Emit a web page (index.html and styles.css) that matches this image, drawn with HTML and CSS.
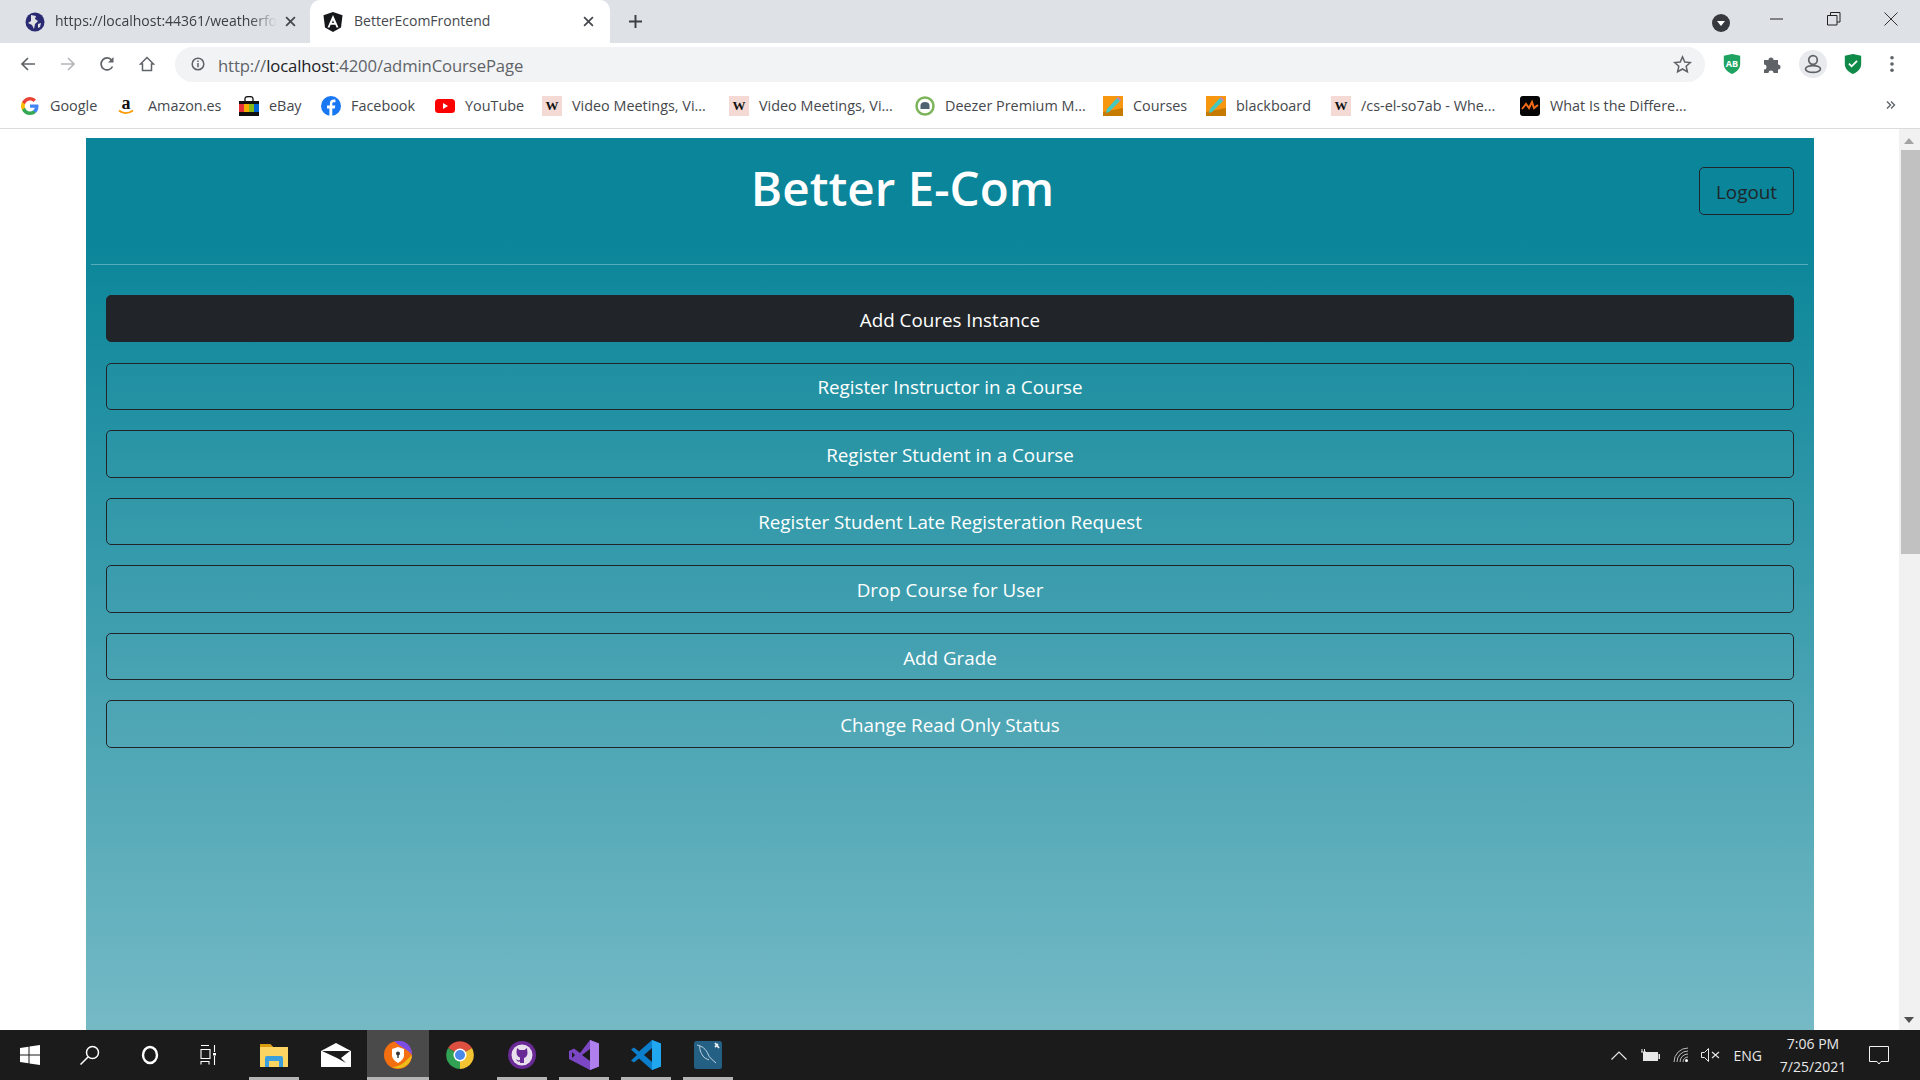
FILE: index.html
```html
<!DOCTYPE html>
<html lang="en">
<head>
<meta charset="utf-8">
<title>BetterEcomFrontend</title>
<link rel="stylesheet" href="styles.css">
</head>
<body>
<div class="tabstrip">
  <div class="tab tab-inactive">
    <svg class="fav" viewBox="0 0 20 20"><circle cx="10" cy="10" r="9.500" fill="#2a2a72"/><path d="M6 3l5 1-1 3 3 2-3 3-1 5-2-4-4-2 3-2zM13 12l3-1-1 4-2 1z" fill="#dfe1e5"/></svg>
    <span class="tab-title tab-fade">https://localhost:44361/weatherfo</span>
    <svg class="tab-x" viewBox="0 0 10 10"><path d="M1 1l8 8M9 1l-8 8" stroke="#45484d" stroke-width="1.600"/></svg>
  </div>
  <div class="tab tab-active">
    <svg class="fav" viewBox="0 0 20 20"><path d="M10 0l9.500 3.300-1.500 12.300L10 20l-8-4.400L.5 3.300z" fill="#15171a"/><path d="M10 3L4.500 15.500h2l1.100-2.800h4.800l1.100 2.800h2zM9 10.900l1-2.700 1 2.700z" fill="#fff"/></svg>
    <span class="tab-title">BetterEcomFrontend</span>
    <svg class="tab-x" viewBox="0 0 10 10"><path d="M1 1l8 8M9 1l-8 8" stroke="#45484d" stroke-width="1.600"/></svg>
  </div>
  <svg class="newtab" viewBox="0 0 12 12"><path d="M6 0v12M0 6h12" stroke="#3c4043" stroke-width="1.800"/></svg>
  <div class="strip-end">
    <svg class="tabsearch" viewBox="0 0 18 18"><circle cx="9" cy="9" r="9" fill="#36393d"/><path d="M5 7h8l-4 5z" fill="#fff"/></svg>
    <svg class="win-btn" viewBox="0 0 14 14"><path d="M0 7h13" stroke="#222" stroke-width="1"/></svg>
    <svg class="win-btn" viewBox="0 0 14 14"><path d="M.5 3.500h9.500v9.500H.5zM3.500 3.500V.5H13v9.500h-3" fill="none" stroke="#222" stroke-width="1"/></svg>
    <svg class="win-btn" viewBox="0 0 14 14"><path d="M.5.5l13 13M13.500.5l-13 13" stroke="#333" stroke-width="1"/></svg>
  </div>
</div>

<div class="toolbar">
  <svg class="nav-ic" viewBox="0 0 16 16"><path d="M15 8H2M8 2L2 8l6 6" fill="none" stroke="#5f6368" stroke-width="1.700"/></svg>
  <svg class="nav-ic" viewBox="0 0 16 16"><path d="M1 8h13M8 2l6 6-6 6" fill="none" stroke="#b4b6b9" stroke-width="1.700"/></svg>
  <svg class="nav-ic" viewBox="0 0 16 16"><path d="M13.500 10.500A6 6 0 1 1 12.800 4.200" fill="none" stroke="#5f6368" stroke-width="1.700"/><path d="M14.500 1v5.500H9z" fill="#5f6368"/></svg>
  <svg class="nav-ic" viewBox="0 0 16 16"><path d="M8 1.500L1.500 8H3.500v6.500h9V8h2z" fill="none" stroke="#5f6368" stroke-width="1.500"/></svg>
  <div class="omnibox">
    <svg class="info" viewBox="0 0 14 14"><circle cx="7" cy="7" r="5.800" fill="none" stroke="#5f6368" stroke-width="1.500"/><path d="M7 6v4.200M7 3.600v1.400" stroke="#5f6368" stroke-width="1.500"/></svg>
    <span class="url"><span class="url-dim">http://</span><span class="url-host">localhost</span><span class="url-dim">:4200/adminCoursePage</span></span>
    <svg class="star" viewBox="0 0 20 20"><path d="M10 2l2.400 5.400 5.800.6-4.300 3.900 1.200 5.700L10 14.700l-5.100 2.900 1.200-5.700L1.800 8l5.800-.6z" fill="none" stroke="#5f6368" stroke-width="1.600"/></svg>
  </div>
  <div class="ext-group">
    <svg class="ext ext-ab" viewBox="0 0 20 22"><path d="M10 0l9 2v9c0 5-4 9-9 11C5 20 1 16 1 11V2z" fill="#1ea362"/><text x="10" y="14" class="ab-text">AB</text></svg>
    <svg class="ext ext-puzzle" viewBox="0 0 20 20"><path d="M1 6h4.500a2.500 2.500 0 1 1 5 0H15v4.400a2.500 2.500 0 1 1 0 5V19h-4.500a2.500 2.500 0 1 0-5 0H1v-3.600a2.500 2.500 0 1 0 0-5z" fill="#5f6368"/></svg>
    <div class="avatar"><svg viewBox="0 0 20 20"><circle cx="10" cy="6" r="4.300" fill="none" stroke="#5f6368" stroke-width="1.700"/><ellipse cx="10" cy="15" rx="7.500" ry="3.400" fill="none" stroke="#5f6368" stroke-width="1.700"/></svg></div>
    <svg class="ext" viewBox="0 0 20 22"><path d="M10 0l9 2v9c0 5-4 9-9 11C5 20 1 16 1 11V2z" fill="#0f8a48"/><path d="M5.500 10.500l3 3 6-6" fill="none" stroke="#fff" stroke-width="2"/></svg>
    <svg class="ext dots" viewBox="0 0 6 20"><circle cx="3" cy="3" r="2" fill="#5f6368"/><circle cx="3" cy="10" r="2" fill="#5f6368"/><circle cx="3" cy="17" r="2" fill="#5f6368"/></svg>
  </div>
</div>

<div class="bookmarks">
  <div class="bm bm-google"><svg class="bm-ic" viewBox="0 0 20 20"><path d="M18.500 10.200c0-.6-.1-1.200-.2-1.700H10v3.300h4.800a4 4 0 0 1-1.800 2.700v2.200h2.900c1.700-1.600 2.600-3.800 2.600-6.500z" fill="#4285f4"/><path d="M10 19c2.400 0 4.400-.8 5.900-2.200L13 14.500c-.8.500-1.800.9-3 .9-2.300 0-4.300-1.600-5-3.700H2v2.300A9 9 0 0 0 10 19z" fill="#34a853"/><path d="M5 11.700a5.400 5.400 0 0 1 0-3.400V6H2a9 9 0 0 0 0 8z" fill="#fbbc05"/><path d="M10 4.600c1.300 0 2.500.5 3.400 1.300L16 3.400A9 9 0 0 0 2 6l3 2.300c.7-2.100 2.700-3.700 5-3.700z" fill="#ea4335"/></svg><span>Google</span></div>
  <div class="bm bm-amazon"><svg class="bm-ic" viewBox="0 0 20 20"><text x="8" y="13" class="amz-text">a</text><path d="M1 14.500c4 3.500 9 3.500 14 0" fill="none" stroke="#f90" stroke-width="1.700"/></svg><span>Amazon.es</span></div>
  <div class="bm bm-ebay"><svg class="bm-ic" viewBox="0 0 20 20"><path d="M6 5V2.500a4 2 0 0 1 8 0V5" fill="none" stroke="#111" stroke-width="1.300"/><rect y="5" width="20" height="15" fill="#111"/><rect y="8" width="5" height="8" fill="#e53238"/><rect x="5" y="8" width="5" height="8" fill="#f5af02"/><rect x="10" y="8" width="5" height="8" fill="#86b817"/><rect x="15" y="8" width="5" height="8" fill="#0064d2"/></svg><span>eBay</span></div>
  <div class="bm bm-fb"><svg class="bm-ic" viewBox="0 0 20 20"><circle cx="10" cy="10" r="10" fill="#1877f2"/><path d="M11.300 20v-7.500h2.500l.5-3h-3V7.800c0-.9.400-1.600 1.700-1.600h1.400V3.600c-2.900-.6-5.500 0-5.500 3.800v2.100H6v3h2.400V20z" fill="#fff"/></svg><span>Facebook</span></div>
  <div class="bm bm-yt"><svg class="bm-ic" viewBox="0 0 20 20"><rect y="3" width="20" height="14" rx="3.500" fill="#f00"/><path d="M8 7l5 3-5 3z" fill="#fff"/></svg><span>YouTube</span></div>
  <div class="bm bm-vm"><span class="wiki">W</span><span>Video Meetings, Vi...</span></div>
  <div class="bm bm-vm2"><span class="wiki">W</span><span>Video Meetings, Vi...</span></div>
  <div class="bm bm-dz"><svg class="bm-ic" viewBox="0 0 20 20"><circle cx="10" cy="10" r="8.500" fill="#fff" stroke="#7cb45a" stroke-width="2.500"/><path d="M5.500 13V9.500a4.500 3.500 0 0 1 9 0V13z" fill="#4f6272"/></svg><span>Deezer Premium M...</span></div>
  <div class="bm bm-cr"><svg class="bm-ic" viewBox="0 0 20 20"><rect width="20" height="20" fill="#f7960f"/><path d="M0 20V16L20 12v8z" fill="#c77a00"/><path d="M3 17l1-4L14 2l3 3L6 16z" fill="#43c9c0"/><path d="M14 2l1-1 3 3-1 1z" fill="#c478d8"/></svg><span>Courses</span></div>
  <div class="bm bm-bb"><svg class="bm-ic" viewBox="0 0 20 20"><rect width="20" height="20" fill="#f7960f"/><path d="M0 20V16L20 12v8z" fill="#c77a00"/><path d="M3 17l1-4L14 2l3 3L6 16z" fill="#43c9c0"/><path d="M14 2l1-1 3 3-1 1z" fill="#c478d8"/></svg><span>blackboard</span></div>
  <div class="bm bm-cs"><span class="wiki">W</span><span>/cs-el-so7ab - Whe...</span></div>
  <div class="bm bm-wh"><svg class="bm-ic" viewBox="0 0 20 20"><rect width="20" height="20" rx="3" fill="#050505"/><path d="M2 13l4-5 3 4 3-6 2 6 4-3" fill="none" stroke="#f26b16" stroke-width="2"/></svg><span>What Is the Differe...</span></div>
  <svg class="more" viewBox="0 0 10 10"><path d="M1 1.500L4.500 5 1 8.500M5 1.500L8.500 5 5 8.500" fill="none" stroke="#5f6368" stroke-width="1.400"/></svg>
</div>

<div class="viewport">
  <main class="panel">
    <header class="panel-head">
      <h1 class="brand">Better E-Com</h1>
      <button class="logout">Logout</button>
    </header>
    <hr class="rule">
    <div class="actions">
      <button class="action action-on">Add Coures Instance</button>
      <button class="action">Register Instructor in a Course</button>
      <button class="action">Register Student in a Course</button>
      <button class="action">Register Student Late Registeration Request</button>
      <button class="action">Drop Course for User</button>
      <button class="action">Add Grade</button>
      <button class="action">Change Read Only Status</button>
    </div>
  </main>
  <div class="scrollbar">
    <div class="arrow-up"></div>
    <div class="thumb"></div>
    <div class="arrow-down"></div>
  </div>
</div>

<footer class="taskbar">
  <div class="tb"><svg viewBox="0 0 20 20"><path d="M0 3l8.500-1.300V9.500H0zM9.500 1.500L20 0v9.500H9.500zM0 10.500h8.500v7.800L0 17zM9.500 10.500H20V20L9.500 18.500z" fill="#fff"/></svg></div>
  <div class="tb"><svg viewBox="0 0 20 20"><circle cx="12.500" cy="7.500" r="6" fill="none" stroke="#fff" stroke-width="1.500"/><path d="M8 12l-7.500 7.500" stroke="#fff" stroke-width="1.500"/></svg></div>
  <div class="tb"><svg viewBox="0 0 20 20"><ellipse cx="10" cy="10" rx="7" ry="8" fill="none" stroke="#fff" stroke-width="2.400"/></svg></div>
  <div class="tb"><svg viewBox="0 0 20 20"><path d="M1 .5h8M1 19.500V16.500h8v3M1 4.500h9v9H1zM14.500 0v7M14.500 11v9" fill="none" stroke="#fff" stroke-width="1.100"/><rect x="13" y="8" width="3" height="2.500" fill="#fff"/></svg></div>
  <div class="tb tb-app tb-first tb-open"><svg class="tb-wide" viewBox="0 0 28 24"><path d="M0 1h10l3 3h15v20H0z" fill="#fcd462"/><path d="M0 1h10l3 3H0z" fill="#d99c0e"/><path d="M5 24v-9a2 2 0 0 1 2-2h14a2 2 0 0 1 2 2v9h-4v-6H9v6z" fill="#3b9edd"/></svg></div>
  <div class="tb tb-app"><svg class="tb-mail" viewBox="0 0 30 24"><path d="M0 8L15 0l15 8v16H0z" fill="#fff"/><path d="M1 8h28l-9 7 5 5-9-5z" fill="#1b1b1b"/></svg></div>
  <div class="tb tb-app tb-active tb-open"><svg class="tb-big" viewBox="0 0 28 28"><circle cx="14" cy="14" r="14" fill="#f36f10"/><path d="M10 0a14 14 0 0 1 18 14c-3-5-10-7-18-14z" fill="#7a4ee6"/><path d="M28 14a14 14 0 0 1-20 12c10 0 14-7 20-12z" fill="#eebd1a"/><path d="M14 6l6 2v6c0 4-3 6-6 8-3-2-6-4-6-8V8z" fill="#fff"/><circle cx="14" cy="12.500" r="2" fill="#333"/><path d="M13.300 13h1.400v4h-1.400z" fill="#333"/></svg></div>
  <div class="tb tb-app"><svg class="tb-big" viewBox="0 0 28 28"><path d="M14 14L2 7a14 14 0 0 1 24 0z" fill="#dd4f3f"/><path d="M14 14L26 7a14 14 0 0 1-12 21z" fill="#f3c332"/><path d="M14 14v14A14 14 0 0 1 2 7z" fill="#31a253"/><circle cx="14" cy="14" r="6.500" fill="#fff"/><circle cx="14" cy="14" r="5" fill="#4b88ea"/></svg></div>
  <div class="tb tb-app tb-open"><svg class="tb-big" viewBox="0 0 28 28"><circle cx="14" cy="14" r="14" fill="#6a2a96"/><circle cx="14" cy="14" r="10.500" fill="#e8e0ec"/><path d="M9 7l2.500 2h5L19 7l.5 5c0 3-2 4.500-3.500 5v5h-4v-1.500c-2 .5-3.500-.5-4-2.500 1 1 2.500 2 4 1v-2.500c-1.500-.5-3.500-2-3.500-5z" fill="#6a2a96"/></svg></div>
  <div class="tb tb-app tb-open"><svg class="tb-vs" viewBox="0 0 30 30"><path d="M21 0l9 3.500v23L21 30 0 19v-8l5-2.500 6 4.500z" fill="#7b47c4"/><path d="M21 0l9 3.500v23L21 30z" fill="#b07fee"/><path d="M21 9v12l-8-6zM3 12v6l3-3z" fill="#1b1b1b"/></svg></div>
  <div class="tb tb-app tb-open"><svg class="tb-vs" viewBox="0 0 30 30"><path d="M21 0l9 3.500v23L21 30 8 18.500 3 22.500 0 20.500 6 15 0 9.500l3-2 5 4z" fill="#0b7fcc"/><path d="M21 0l9 3.500v23L21 30z" fill="#21a6f0"/><path d="M21 8v14l-8-7z" fill="#1b1b1b"/></svg></div>
  <div class="tb tb-app tb-open"><svg class="tb-big" viewBox="0 0 28 28"><rect width="28" height="28" rx="2.500" fill="#245f84"/><path d="M3 4c5 1 9 4 11 9 1 4 5 6 8 9M6 5c-1 3 1 7 3 10 1 2 4 3 6 4" fill="none" stroke="#c2d6e2" stroke-width="1"/><path d="M21 2l4 5M24 3l-3 3" stroke="#e7eef3" stroke-width="1.800"/></svg></div>
  <div class="tray">
    <svg class="tray-ic chev" viewBox="0 0 16 9"><path d="M.5 8.500L8 1l7.500 7.500" fill="none" stroke="#e8e8e8" stroke-width="1.200"/></svg>
    <svg class="tray-ic bat" viewBox="0 0 20 13"><path d="M2 0v3M4.500 0v3M1 3h5M3.500 5v3" stroke="#e8e8e8" stroke-width="1"/><rect x="3" y="3" width="15" height="9" fill="#e8e8e8"/><rect x="18.500" y="5" width="1.500" height="5" fill="#e8e8e8"/></svg>
    <svg class="tray-ic wifi" viewBox="0 0 16 16"><path d="M1 15a14 14 0 0 1 14-14M4 15A11 11 0 0 1 15 4M7 15a8 8 0 0 1 8-8M10 15a5 5 0 0 1 5-5" fill="none" stroke="#bdbdbd" stroke-width="1"/><circle cx="13.500" cy="13.500" r="1.500" fill="#fff"/></svg>
    <svg class="tray-ic vol" viewBox="0 0 19 14"><path d="M.5 4.500h3L7.500.5v13l-4-4h-3z" fill="none" stroke="#e8e8e8"/><path d="M11 4l7 6M18 4l-7 6" stroke="#e8e8e8" stroke-width="1.100"/></svg>
    <span class="lang">ENG</span>
    <div class="clock"><span>7:06 PM</span><span>7/25/2021</span></div>
    <svg class="tray-ic notif" viewBox="0 0 20 19"><path d="M.5.500h19v15H12l-2 2.500-2-2.500H.5z" fill="none" stroke="#f2f2f2"/></svg>
  </div>
</footer>
</body>
</html>
```

FILE: styles.css
```css
* { box-sizing: border-box; }
html, body { margin: 0; height: 100%; overflow: hidden; }
body { width: 1920px; height: 1080px; display: flex; flex-direction: column; background: #fff; font-family: "Open Sans", "Noto Sans", sans-serif; }

/* Tab strip */
.tabstrip { height: 43px; flex: none; background: #dee1e6; display: flex; align-items: center; }
.tab { height: 43px; display: flex; align-items: center; font-size: 14px; color: #3c4043; }
.tab-inactive { width: 310px; padding: 0 14px 0 25px; }
.tab-active { width: 300px; padding: 0 16px 0 13px; background: #fff; border-radius: 10px 10px 0 0; color: #45484d; }
.fav { width: 20px; height: 20px; flex: none; }
.tab-title { flex: 1; margin: 0 0 2px 10px; white-space: nowrap; overflow: hidden; }
.tab-active .tab-title { margin-left: 11px; }
.tab-fade { -webkit-mask-image: linear-gradient(90deg, #000 88%, transparent); mask-image: linear-gradient(90deg, #000 88%, transparent); }
.tab-x { width: 11px; height: 11px; flex: none; margin-left: 8px; }
.newtab { width: 13px; height: 13px; margin-left: 19px; }
.strip-end { margin-left: auto; display: flex; align-items: center; padding-right: 22px; }
.tabsearch { width: 18px; height: 18px; margin: 3px 40px 0 0; }
.win-btn { width: 14px; height: 14px; margin-top: -6px; }
.win-btn + .win-btn { margin-left: 43px; }

/* Toolbar */
.toolbar { height: 41px; flex: none; background: #fff; display: flex; align-items: center; padding-left: 20px; }
.nav-ic { width: 16px; height: 16px; margin-right: 24px; flex: none; }
.nav-ic:nth-child(2) { margin-right: 23px; }
.nav-ic:nth-child(4) { margin-right: 19px; }
.omnibox { width: 1530px; height: 35px; flex: none; margin: 1px 0 0 1px; background: #f1f3f4; border-radius: 18px; display: flex; align-items: center; padding: 0 13px 0 16px; }
.info { width: 14px; height: 14px; flex: none; margin-right: 13px; }
.url { font-size: 16.700px; color: #5f6368; letter-spacing: -.12px; flex: 1; white-space: nowrap; padding-top: 2px; }
.url-host { color: #202124; }
.url-dim { color: #5f6368; }
.star { width: 19px; height: 19px; flex: none; }
.ext-group { display: flex; align-items: center; margin-left: 17px; }
.ext { width: 20px; height: 20px; flex: none; }
.ext-puzzle { margin-left: 21px; }
.ab-text { font: 700 10px "Open Sans", sans-serif; fill: #fff; text-anchor: middle; }
.avatar { width: 28px; height: 28px; border-radius: 50%; background: #e8eaed; display: flex; align-items: center; justify-content: center; margin: 0 16px 0 16px; }
.avatar svg { width: 20px; height: 20px; }
.dots { width: 6px; height: 18px; margin-left: 26px; }

/* Bookmarks */
.bookmarks { height: 45px; flex: none; background: #fff; border-bottom: 1px solid #d9dbdf; display: flex; align-items: center; padding-left: 20px; font-size: 14.400px; color: #45484d; position: relative; }
.bm { display: flex; align-items: center; white-space: nowrap; flex: none; }
.bm > span:last-child { margin-bottom: 2px; }
.bm-ic { width: 20px; height: 20px; margin-right: 10px; flex: none; }
.amz-text { font: 700 18px "Liberation Serif", serif; fill: #111; text-anchor: middle; }
.wiki { width: 20px; height: 20px; margin-right: 10px; background: #f5d9d4; color: #111; font: 700 13px "Liberation Serif", serif; display: flex; align-items: center; justify-content: center; flex: none; }
.bm-google { width: 98px; }
.bm-amazon { width: 121px; }
.bm-ebay { width: 82px; }
.bm-fb { width: 114px; }
.bm-yt { width: 107px; }
.bm-vm { width: 187px; }
.bm-vm2 { width: 186px; }
.bm-dz { width: 188px; }
.bm-cr { width: 103px; }
.bm-bb { width: 125px; }
.bm-cs { width: 189px; }
.more { width: 10px; height: 10px; position: absolute; right: 24px; top: 16px; }

/* Page */
.viewport { flex: 1; min-height: 0; display: flex; overflow: hidden; }
.panel { width: 1728px; margin: 9px 0 0 86px; height: 892px; flex: none; padding: 0 20px; background: linear-gradient(#0a8599 96px, #75b9c5 892px); }
.panel-head { display: flex; align-items: flex-start; height: 126px; }
.brand { flex: 1; margin: 16px 0 0; text-align: center; font-size: 47.600px; line-height: 68px; font-weight: 600; color: #fff; }
.logout { width: 95px; height: 48px; margin-top: 29px; background: transparent; border: 1px solid #212529; border-radius: 5px; font: 400 18.900px "Open Sans", sans-serif; color: #212529; padding: 1px 0 0; }
.rule { margin: 0 -14px 0 -15px; border: 0; height: 1px; background: rgba(255,255,255,.3); }
.actions { display: flex; flex-direction: column; gap: 20.200px; margin-top: 30px; }
.action { height: 47.400px; width: 100%; flex: none; background: rgba(255,255,255,.02); border: 1.500px solid #212529; border-radius: 5px; font: 400 18.800px "Open Sans", sans-serif; color: #fff; padding: 2px 0 0; }
.action-on { background: #212529; }
.scrollbar { margin-left: auto; width: 21px; background: #f1f1f1; display: flex; flex-direction: column; align-items: flex-end; }
.arrow-up { width: 0; height: 0; margin: 9px 6px 0; border: 5px solid transparent; border-top: 0; border-bottom: 6px solid #a3a3a3; }
.thumb { width: 19px; height: 404px; background: #c1c1c1; margin-top: 6px; }
.arrow-down { width: 0; height: 0; margin: auto 6px 7px; border: 5px solid transparent; border-bottom: 0; border-top: 6px solid #505050; }

/* Taskbar */
.taskbar { height: 50px; flex: none; background: #1b1b1b; display: flex; align-items: stretch; }
.tb { width: 60px; height: 50px; flex: none; display: flex; align-items: center; justify-content: center; position: relative; }
.tb-app { width: 62px; }
.tb-first { margin-left: 2.500px; }
.tb svg { width: 20px; height: 20px; }
.tb svg.tb-big { width: 28px; height: 28px; }
.tb svg.tb-wide { width: 28px; height: 24px; }
.tb svg.tb-mail { width: 30px; height: 24px; }
.tb svg.tb-vs { width: 30px; height: 30px; }
.tb-open::after { content: ""; position: absolute; left: 6px; right: 6px; bottom: 0; height: 3px; background: #b4b4b4; }
.tb-active { background: #4a4a4a; }
.tb-active::after { left: 0; right: 0; }
.tray { margin-left: auto; display: flex; align-items: center; color: #e8e8e8; }
.tray-ic { flex: none; }
.chev { width: 16px; height: 9px; }
.bat { width: 20px; height: 13px; margin-left: 13px; }
.wifi { width: 16px; height: 16px; margin-left: 13px; }
.vol { width: 19px; height: 14px; margin-left: 12px; }
.lang { font-size: 14px; margin-left: 14px; }
.clock { display: flex; flex-direction: column; align-items: center; font-size: 14px; line-height: 23px; margin-left: 16px; width: 70px; }
.notif { width: 20px; height: 19px; margin: 0 31px 0 21px; }
```
